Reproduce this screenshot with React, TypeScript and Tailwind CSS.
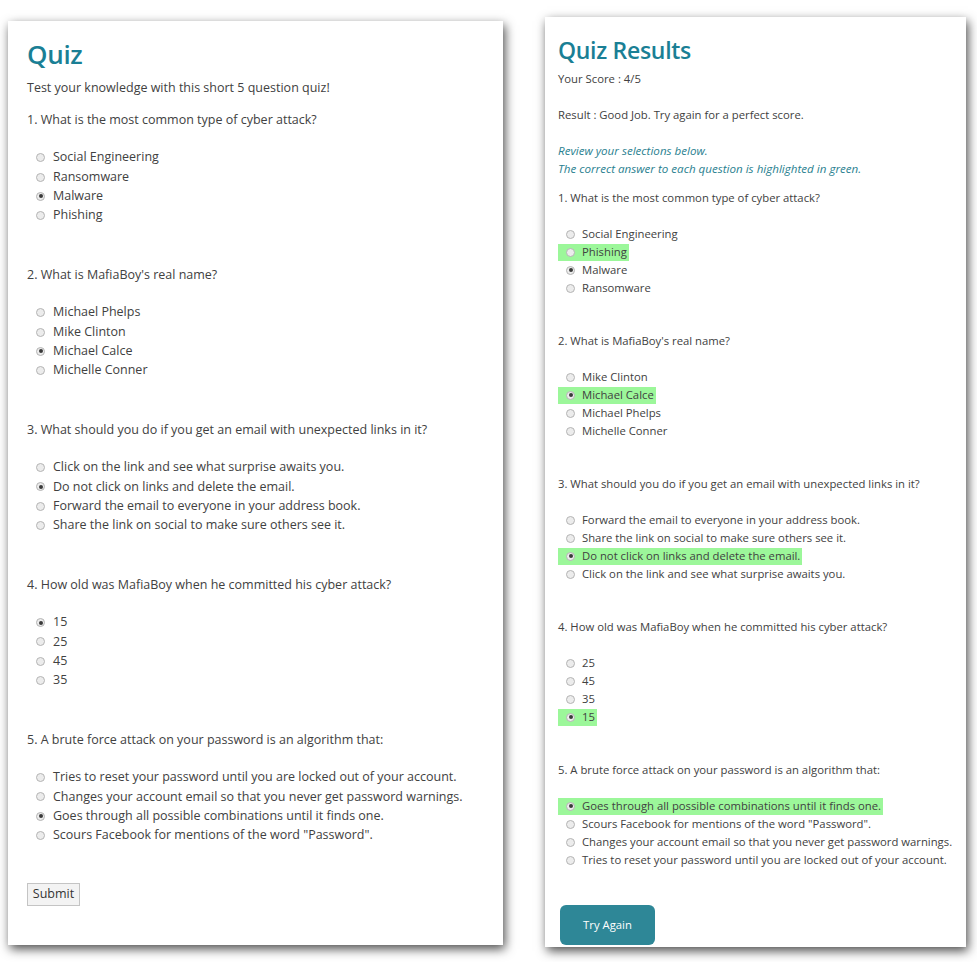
import React from "react";

type Q = { q: string; opts: string[]; sel: number; correct?: number };

const leftQs: Q[] = [
  { q: "1. What is the most common type of cyber attack?", opts: ["Social Engineering", "Ransomware", "Malware", "Phishing"], sel: 2 },
  { q: "2. What is MafiaBoy's real name?", opts: ["Michael Phelps", "Mike Clinton", "Michael Calce", "Michelle Conner"], sel: 2 },
  { q: "3. What should you do if you get an email with unexpected links in it?", opts: ["Click on the link and see what surprise awaits you.", "Do not click on links and delete the email.", "Forward the email to everyone in your address book.", "Share the link on social to make sure others see it."], sel: 1 },
  { q: "4. How old was MafiaBoy when he committed his cyber attack?", opts: ["15", "25", "45", "35"], sel: 0 },
  { q: "5. A brute force attack on your password is an algorithm that:", opts: ["Tries to reset your password until you are locked out of your account.", "Changes your account email so that you never get password warnings.", "Goes through all possible combinations until it finds one.", "Scours Facebook for mentions of the word \"Password\"."], sel: 2 },
];

const rightQs: Q[] = [
  { q: "1. What is the most common type of cyber attack?", opts: ["Social Engineering", "Phishing", "Malware", "Ransomware"], sel: 2, correct: 1 },
  { q: "2. What is MafiaBoy's real name?", opts: ["Mike Clinton", "Michael Calce", "Michael Phelps", "Michelle Conner"], sel: 1, correct: 1 },
  { q: "3. What should you do if you get an email with unexpected links in it?", opts: ["Forward the email to everyone in your address book.", "Share the link on social to make sure others see it.", "Do not click on links and delete the email.", "Click on the link and see what surprise awaits you."], sel: 2, correct: 2 },
  { q: "4. How old was MafiaBoy when he committed his cyber attack?", opts: ["25", "45", "35", "15"], sel: 3, correct: 3 },
  { q: "5. A brute force attack on your password is an algorithm that:", opts: ["Goes through all possible combinations until it finds one.", "Scours Facebook for mentions of the word \"Password\".", "Changes your account email so that you never get password warnings.", "Tries to reset your password until you are locked out of your account."], sel: 0, correct: 0 },
];

function Radio({ checked, size }: { checked: boolean; size: number }) {
  return (
    <span
      className="inline-flex items-center justify-center rounded-full border border-[#b4b4b4] bg-[#ececec] shrink-0"
      style={{ width: size, height: size }}
    >
      {checked && <span className="block w-[4px] h-[4px] rounded-full bg-[#3a3a3a]" />}
    </span>
  );
}

const font = { fontFamily: '"Open Sans", "Noto Sans", sans-serif' };

export default function App() {
  return (
    <div className="w-[977px] h-[962px] bg-white flex items-start text-[#414141]" style={font}>
      {/* Left card */}
      <div className="ml-[8px] mt-[21px] w-[495px] h-[924px] bg-white shadow-[2px_4px_10px_rgba(0,0,0,0.7)] pl-[19px] pt-[16px] flex flex-col">
        <h1 className="text-[26px] leading-[34px] text-[#1a7f95] font-semibold tracking-[-0.3px]">Quiz</h1>
        <p className="text-[12.5px] leading-[19.4px] mt-[7px]">Test your knowledge with this short 5 question quiz!</p>
        <div className="mt-[12.6px]">
          {leftQs.map((q, i) => (
            <div key={i} className="mb-[39.4px]">
              <p className="text-[12.5px] leading-[19.4px]">{q.q}</p>
              <div className="mt-[18.6px] pl-[9px]">
                {q.opts.map((o, j) => (
                  <div key={j} className="flex items-center h-[19.4px] text-[12.5px]">
                    <Radio checked={q.sel === j} size={9} />
                    <span className="ml-[8px]">{o}</span>
                  </div>
                ))}
              </div>
            </div>
          ))}
        </div>
        <div className="-mt-[5px]">
          <button className="h-[23px] w-[53px] border border-[#c4c4c4] bg-[#f3f3f3] text-[12.5px] text-[#333] leading-none">Submit</button>
        </div>
      </div>

      {/* Right card */}
      <div className="ml-[42px] mt-[17px] w-[421px] h-[930px] bg-white shadow-[2px_4px_10px_rgba(0,0,0,0.7)] pl-[13px] pt-[18px] flex flex-col">
        <h1 className="text-[23px] leading-[30px] text-[#1a7f95] font-semibold tracking-[-0.3px]">Quiz Results</h1>
        <p className="text-[11.3px] leading-[18px] mt-[5px]">Your Score : 4/5</p>
        <p className="text-[11.3px] leading-[18px] mt-[18px]">Result : Good Job. Try again for a perfect score.</p>
        <p className="text-[11.6px] leading-[18px] mt-[18px] italic text-[#2a7f90]">Review your selections below.</p>
        <p className="text-[11.6px] leading-[18px] italic text-[#2a7f90]">The correct answer to each question is highlighted in green.</p>
        <div className="mt-[11px]">
          {rightQs.map((q, i) => (
            <div key={i} className="mb-[35px]">
              <p className="text-[11.3px] leading-[18px]">{q.q}</p>
              <div className="mt-[18px]">
                {q.opts.map((o, j) => (
                  <div key={j} className="h-[18px] flex items-center">
                    <div className={"flex items-center h-[17px] pl-[8px] pr-[2px] text-[11.3px] " + (q.correct === j ? "bg-[#9cf79a]" : "")}>
                      <Radio checked={q.sel === j} size={9} />
                      <span className="ml-[7px]">{o}</span>
                    </div>
                  </div>
                ))}
              </div>
            </div>
          ))}
        </div>
        <div className="mt-[1px] pl-[2px]">
          <button className="h-[40px] w-[95px] rounded-[6px] bg-[#2e8797] text-white text-[11.3px]">Try Again</button>
        </div>
      </div>
    </div>
  );
}
